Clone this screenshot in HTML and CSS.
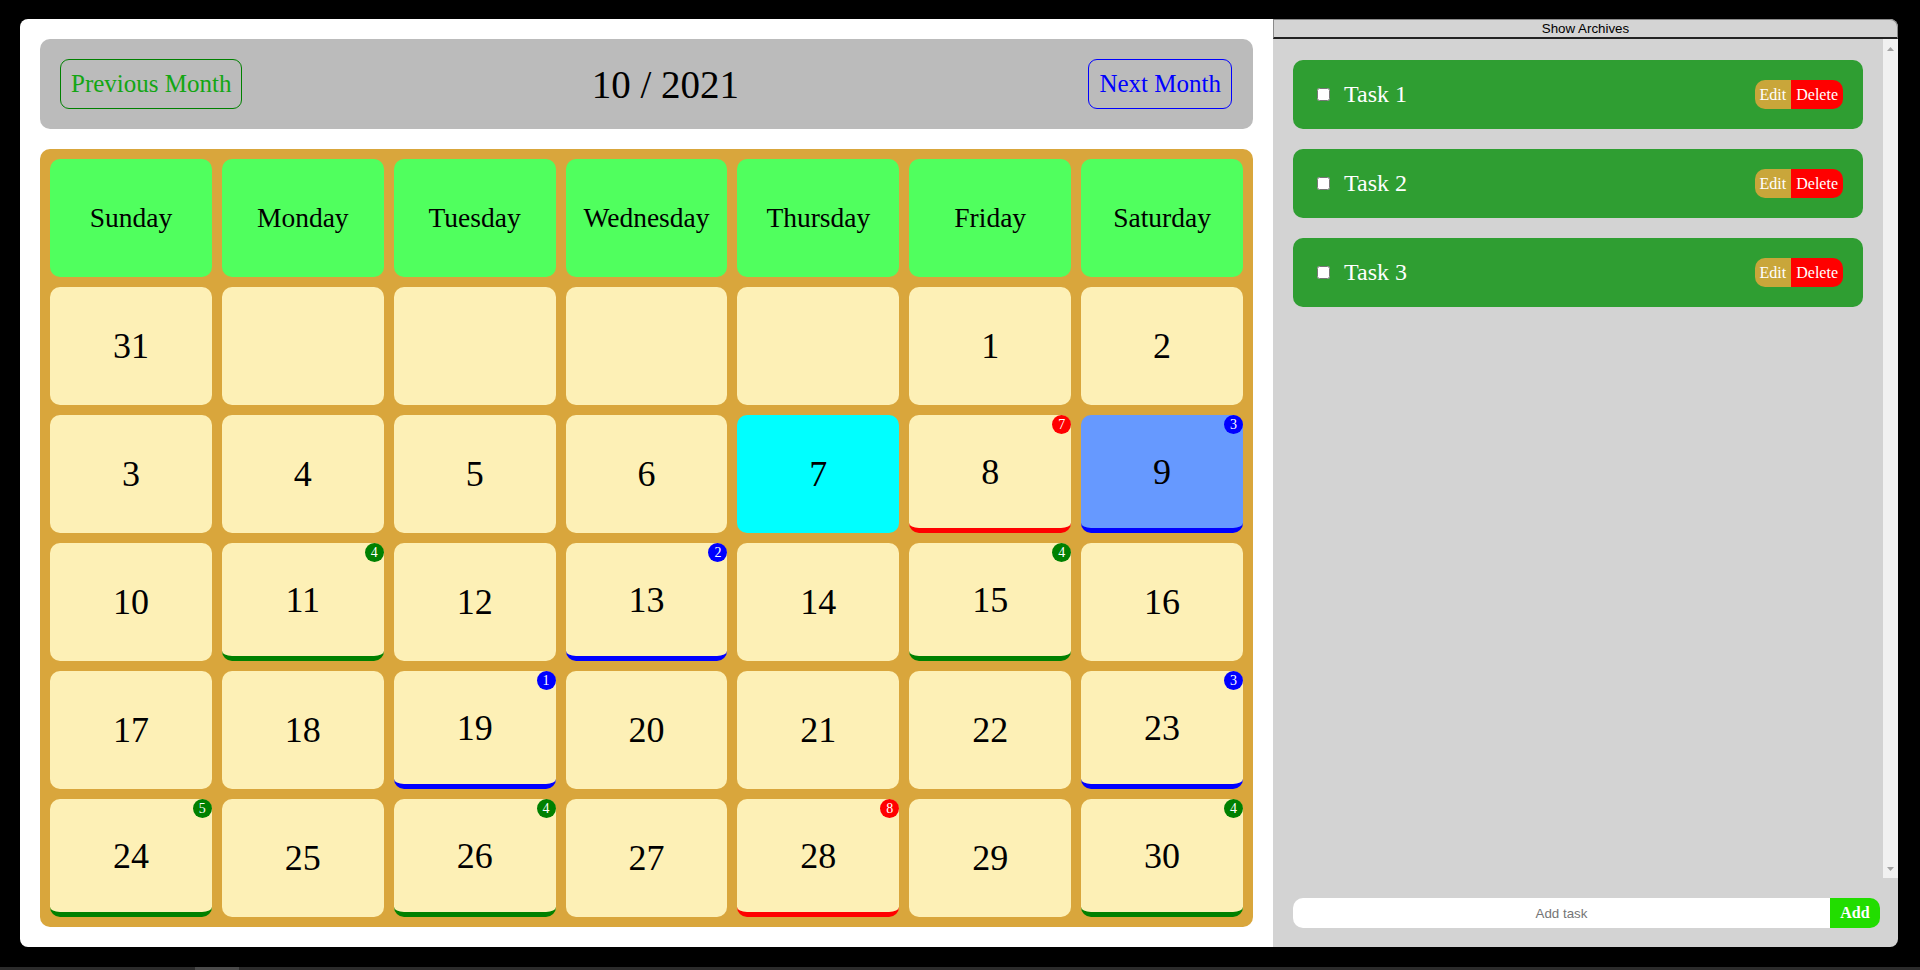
FILE: index.html
```html
<!DOCTYPE html>
<html lang="en">
<head>
<meta charset="utf-8">
<title>Calendar</title>
<link rel="stylesheet" href="styles.css">
</head>
<body>
<div class="app">
  <main class="main">
    <div class="header">
      <button class="nav-btn prev">Previous Month</button>
      <div class="title">10 / 2021</div>
      <button class="nav-btn next">Next Month</button>
    </div>
    <div class="calendar">
      <div class="day-name">Sunday</div>
      <div class="day-name">Monday</div>
      <div class="day-name">Tuesday</div>
      <div class="day-name">Wednesday</div>
      <div class="day-name">Thursday</div>
      <div class="day-name">Friday</div>
      <div class="day-name">Saturday</div>

      <div class="cell">31</div>
      <div class="cell"></div>
      <div class="cell"></div>
      <div class="cell"></div>
      <div class="cell"></div>
      <div class="cell">1</div>
      <div class="cell">2</div>

      <div class="cell">3</div>
      <div class="cell">4</div>
      <div class="cell">5</div>
      <div class="cell">6</div>
      <div class="cell today">7</div>
      <div class="cell ev-red">8<span class="badge red">7</span></div>
      <div class="cell selected ev-blue">9<span class="badge blue">3</span></div>

      <div class="cell">10</div>
      <div class="cell ev-green">11<span class="badge green">4</span></div>
      <div class="cell">12</div>
      <div class="cell ev-blue">13<span class="badge blue">2</span></div>
      <div class="cell">14</div>
      <div class="cell ev-green">15<span class="badge green">4</span></div>
      <div class="cell">16</div>

      <div class="cell">17</div>
      <div class="cell">18</div>
      <div class="cell ev-blue">19<span class="badge blue">1</span></div>
      <div class="cell">20</div>
      <div class="cell">21</div>
      <div class="cell">22</div>
      <div class="cell ev-blue">23<span class="badge blue">3</span></div>

      <div class="cell ev-green">24<span class="badge green">5</span></div>
      <div class="cell">25</div>
      <div class="cell ev-green">26<span class="badge green">4</span></div>
      <div class="cell">27</div>
      <div class="cell ev-red">28<span class="badge red">8</span></div>
      <div class="cell">29</div>
      <div class="cell ev-green">30<span class="badge green">4</span></div>
    </div>
  </main>
  <aside class="sidebar">
    <button class="archive-btn">Show Archives</button>
    <div class="task-area">
      <div class="task-list">
        <div class="task">
          <label class="task-label"><input type="checkbox" class="task-check"><span class="task-name">Task 1</span></label>
          <div class="task-actions"><button class="edit-btn">Edit</button><button class="delete-btn">Delete</button></div>
        </div>
        <div class="task">
          <label class="task-label"><input type="checkbox" class="task-check"><span class="task-name">Task 2</span></label>
          <div class="task-actions"><button class="edit-btn">Edit</button><button class="delete-btn">Delete</button></div>
        </div>
        <div class="task">
          <label class="task-label"><input type="checkbox" class="task-check"><span class="task-name">Task 3</span></label>
          <div class="task-actions"><button class="edit-btn">Edit</button><button class="delete-btn">Delete</button></div>
        </div>
      </div>
      <div class="scrollbar">
        <svg class="arrow" width="15" height="17" viewBox="0 0 15 17"><path d="M4 12 L7.5 8 L11 12 Z" fill="#a3a3a3"/></svg>
        <svg class="arrow" width="15" height="17" viewBox="0 0 15 17"><path d="M4 6 L7.5 10 L11 6 Z" fill="#a3a3a3"/></svg>
      </div>
    </div>
    <div class="add-row">
      <input class="add-input" type="text" placeholder="Add task" autofocus>
      <button class="add-btn">Add</button>
    </div>
  </aside>
</div>
<div class="taskbar"><div class="taskbar-item"></div></div>
</body>
</html>
```
FILE: styles.css
```css
html, body {
  margin: 0;
  padding: 0;
  background: #000;
  font-family: "Liberation Serif", "Times New Roman", serif;
}

body {
  padding-top: 19px;
  height: 970px;
  box-sizing: border-box;
  overflow: hidden;
}

.app {
  display: flex;
  height: 928px;
  margin: 0 22px 20px 20px;
}

.main {
  width: 1253px;
  flex: none;
  box-sizing: border-box;
  background: #fff;
  border-radius: 8px 0 0 8px;
  padding: 20px;
  display: flex;
  flex-direction: column;
  gap: 20px;
}

.header {
  height: 90px;
  flex: none;
  box-sizing: border-box;
  background: #bbbbbb;
  border-radius: 10px;
  padding: 0 21px 0 20px;
  display: flex;
  align-items: center;
  justify-content: space-between;
}

.nav-btn {
  font-family: "Liberation Serif", "Times New Roman", serif;
  font-size: 25px;
  height: 50px;
  padding: 0 10px;
  background: transparent;
  border-radius: 9px;
  cursor: pointer;
}

.prev {
  color: #13a613;
  border: 1px solid #008000;
}

.next {
  color: #0000ff;
  border: 1px solid #0000ff;
}

.title {
  font-size: 39px;
  color: #000;
}

.calendar {
  flex: 1;
  background: #d9a63c;
  border-radius: 10px;
  padding: 10px;
  display: grid;
  grid-template-columns: repeat(7, 1fr);
  grid-auto-rows: 1fr;
  gap: 10px;
}

.day-name {
  background: #50ff5e;
  border-radius: 10px;
  display: flex;
  align-items: center;
  justify-content: center;
  font-size: 27.5px;
  color: #000;
}

.cell {
  position: relative;
  box-sizing: border-box;
  background: #fdf0b6;
  border-radius: 10px;
  display: flex;
  align-items: center;
  justify-content: center;
  font-size: 36px;
  color: #000;
}

.today {
  background: #00ffff;
}

.selected {
  background: #6699ff;
}

.ev-red { border-bottom: 5px solid #ff0000; }
.ev-blue { border-bottom: 5px solid #0000ff; }
.ev-green { border-bottom: 5px solid #008000; }

.badge {
  position: absolute;
  top: 0;
  right: 0;
  width: 19px;
  height: 19px;
  border-radius: 50%;
  color: #fff;
  font-size: 14px;
  line-height: 19px;
  text-align: center;
}

.badge.red { background: #ff0000; }
.badge.blue { background: #0000ff; }
.badge.green { background: #008000; }

.sidebar {
  width: 625px;
  flex: none;
  background: #d3d3d3;
  border-radius: 0 8px 8px 0;
  display: flex;
  flex-direction: column;
  overflow: hidden;
}

.archive-btn {
  flex: none;
  width: 100%;
  height: 20px;
  margin: 0;
  padding: 0;
  font-family: "Liberation Sans", Arial, sans-serif;
  font-size: 13.33px;
  color: #000;
  background: #d4d4d4;
  border: 1px solid #8a8a8a;
  border-bottom: 2px solid #222;
  border-radius: 0 8px 0 0;
  box-sizing: border-box;
}

.task-area {
  flex: 1;
  display: flex;
  min-height: 0;
}

.task-list {
  flex: 1;
  overflow: hidden;
  padding: 21px 20px;
  display: flex;
  flex-direction: column;
  gap: 20px;
}

.scrollbar {
  width: 15px;
  flex: none;
  background: #f1f1f1;
  display: flex;
  flex-direction: column;
  justify-content: space-between;
}

.arrow {
  display: block;
}

.task {
  flex: none;
  background: #2f9e32;
  border-radius: 10px;
  padding: 20px;
  display: flex;
  align-items: center;
  justify-content: space-between;
}

.task-label {
  display: flex;
  align-items: center;
}

.task-check {
  width: 13px;
  height: 13px;
  margin: 3px 3px 3px 4px;
}

.task-name {
  color: #fff;
  font-size: 24px;
  margin-left: 11px;
}

.task-actions {
  display: flex;
}

.edit-btn, .delete-btn {
  font-family: "Liberation Serif", "Times New Roman", serif;
  font-size: 16px;
  color: #fff;
  border: none;
  padding: 5px;
  margin: 0;
  height: 29px;
}

.edit-btn {
  background: #c9a63a;
  border-radius: 10px 0 0 10px;
}

.delete-btn {
  background: #ff0000;
  border-radius: 0 10px 10px 0;
}

.add-row {
  flex: none;
  display: flex;
  height: 30px;
  margin: 20px 18px 19px 20px;
}

.add-input {
  flex: 1;
  border: none;
  outline: none;
  background: #fff;
  border-radius: 10px 0 0 10px;
  text-align: center;
  font-family: "Liberation Sans", Arial, sans-serif;
  font-size: 13.33px;
  padding: 0;
}

.add-input::placeholder {
  color: #757575;
}

.add-btn {
  width: 50px;
  border: none;
  background: #22dd00;
  color: #fff;
  font-family: "Liberation Serif", "Times New Roman", serif;
  font-weight: bold;
  font-size: 16px;
  border-radius: 0 10px 10px 0;
  padding: 0;
}

.taskbar {
  height: 3px;
  background: #2b2b2b;
  display: flex;
}

.taskbar-item {
  margin-left: 195px;
  width: 44px;
  background: #4a4a4a;
}
```
